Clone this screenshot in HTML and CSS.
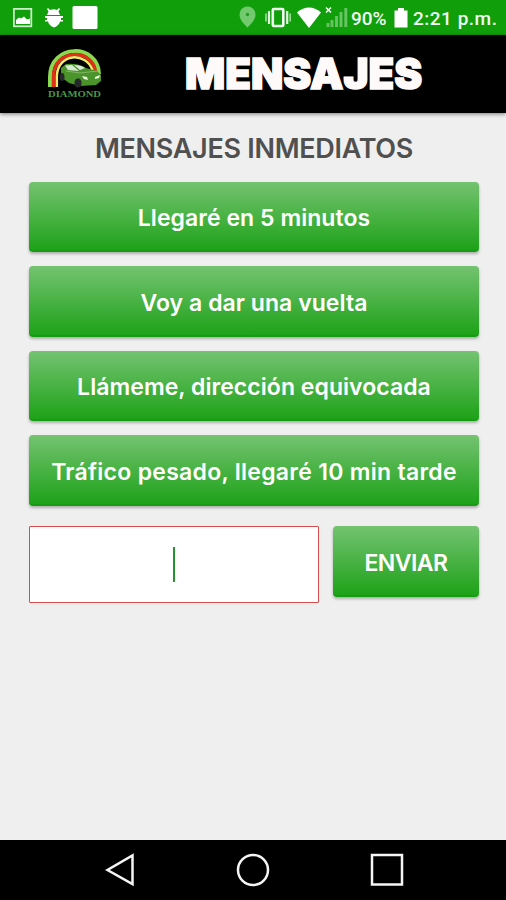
FILE: index.html
```html
<!DOCTYPE html>
<html lang="es">
<head>
  <meta charset="UTF-8" />
  <meta name="viewport" content="width=device-width, initial-scale=1.0"/>
  <title>Mensajes</title>
  <link rel="stylesheet" href="styles.css">
</head>
<body>

  <div class="status-bar">
    <svg class="status-left" width="100" height="35" viewBox="0 0 100 35">
      <rect x="13.900" y="8.900" width="17.400" height="17.400" fill="none" stroke="#c9efc6" stroke-width="1.800"/>
      <path d="M16 24v-4l3-2.500 2 1 3-2 3 3 3-1v5.500z" fill="#fff"/>
      <path d="M48 8l2 2q4-1.500 7 0l2-2 1 1-1.500 2.500 1.500 3.500H47l1.500-3.500L47 9z" fill="#fff"/>
      <path d="M45 16h18v2h-2v2h2v1.500h-3q-1 4-6 6-5-2-6-6h-3V20h2v-2h-2z" fill="#fff"/>
      <rect x="72.500" y="6" width="25" height="23" rx="1.500" fill="#fff"/>
    </svg>
    <div class="status-right">
      <svg width="112" height="35" viewBox="0 0 112 35">
        <path d="M9.500 6.500a8 8 0 0 1 8 8c0 5-4 9-8 13-4-4-8-8-8-13a8 8 0 0 1 8-8z" fill="#72c96e"/>
        <circle cx="9.500" cy="14.500" r="1.700" fill="#249b20"/>
        <rect x="34.800" y="9" width="10.500" height="17" rx="1" fill="none" stroke="#f0fbef" stroke-width="2.600"/>
        <path d="M31 11v13M49.200 11v13" stroke="#dff5dd" stroke-width="2.200"/>
        <path d="M28 13.500v8M52.200 13.500v8" stroke="#9cdc99" stroke-width="1.600"/>
        <path d="M59 12.500q12-10 24 0L71 28z" fill="#fff"/>
        <path d="M88 7.500l5 5m0-5l-5 5" stroke="#fff" stroke-width="1.500"/>
        <path d="M90 23v4M94 20v7M98.500 16v11M103 12v15M107.800 8v19" stroke="#68c464" stroke-width="2.900"/>
      </svg>
      <span class="percent">90%</span>
      <svg class="battery" width="14" height="35" viewBox="0 0 14 35">
        <path d="M4 8h6v2.500h3.500v17H.5v-17H4z" fill="#fff"/>
      </svg>
      <span class="clock">2:21 p.m.</span>
    </div>
  </div>

  <header>
    <svg class="logo" width="54" height="50" viewBox="0 0 54 50">
      <path d="M2 38V28C2-6 50-6 51 25" fill="none" stroke="#8bd94f" stroke-width="4"/>
      <path d="M5.500 38V28C5.500-1 45-1 47.500 23" fill="none" stroke="#df3018" stroke-width="3.500"/>
      <path d="M8.800 38V27C10 3.500 38 3 44.500 21" fill="none" stroke="#f5e96b" stroke-width="2.500"/>
      <path d="M13 19l5-4q12-1 20 4l11 3 4 4v6l-5 4-16 1-11-3-8-6z" fill="#4b942c"/>
      <path d="M17 16.500l7-.5 7 6-11-1zM26 16q7 0 11 3l-5 2z" fill="#d9e8d5"/>
      <path d="M18 22l14 2 18-2" fill="none" stroke="#82b866" stroke-width="1"/>
      <ellipse cx="30" cy="34" rx="3.500" ry="4.500" fill="#25292a"/>
      <ellipse cx="14" cy="28" rx="2.500" ry="4" fill="#25292a"/>
      <path d="M34 27l5 1 1 3-4-1zM47 28l5-2-1 3-4 1z" fill="#edf6df"/>
      <text class="logo-name" x="0" y="48" textLength="53" lengthAdjust="spacingAndGlyphs">DIAMOND</text>
    </svg>
    <h1>MENSAJES</h1>
  </header>

  <main>
    <h2>MENSAJES INMEDIATOS</h2>
    <div class="messages">
      <button type="button">Llegaré en 5 minutos</button>
      <button type="button">Voy a dar una vuelta</button>
      <button type="button">Llámeme, dirección equivocada</button>
      <button type="button" class="long">Tráfico pesado, llegaré 10 min tarde</button>
    </div>
    <form class="send-row" onsubmit="return false">
      <div class="message-input" contenteditable="true"><span class="caret"></span></div>
      <button type="submit" class="send">ENVIAR</button>
    </form>
  </main>

  <nav>
    <svg width="32" height="36" viewBox="0 0 32 36"><path d="M28.500 3.500v28.500L3.500 18z"/></svg>
    <svg width="36" height="36" viewBox="0 0 36 36"><circle cx="18" cy="18" r="15"/></svg>
    <svg width="36" height="36" viewBox="0 0 36 36"><rect x="3" y="3" width="30" height="29.500"/></svg>
  </nav>

</body>
</html>
```
FILE: styles.css
```css
* { margin: 0; padding: 0; box-sizing: border-box; }

body {
  height: 900px;
  display: flex;
  flex-direction: column;
  overflow: hidden;
  font-family: Inter, sans-serif;
  background: #efefef;
}

svg {
  display: block;
  flex: none;
}

.status-bar {
  height: 35px;
  flex: none;
  display: flex;
  justify-content: space-between;
  background: #109f0b;
  color: #f2fcf1;
}

.status-right {
  display: flex;
  width: 268px;
  white-space: nowrap;
  font-family: Roboto, sans-serif;
  font-size: 19px;
  font-weight: 500;
  line-height: 37px;
}

.percent {
  width: 44px;
  padding-left: 1px;
}

.clock {
  padding-left: 5px;
  letter-spacing: 0.5px;
}

header {
  height: 78px;
  flex: none;
  display: flex;
  align-items: center;
  padding-left: 48px;
  background: #000;
  box-shadow: 0 1px 4px rgba(0, 0, 0, 0.5);
}

.logo-name {
  font-family: "Liberation Serif", serif;
  font-size: 8px;
  font-weight: bold;
  fill: #4e9745;
}

h1 {
  margin-left: 83px;
  font-size: 42px;
  font-weight: 900;
  line-height: 78px;
  color: #fffafa;
  -webkit-text-stroke: 1.5px #fffafa;
  stroke-linejoin: round;
}

main {
  flex: 1;
  padding: 18px 27px 0 29px;
}

h2 {
  height: 50.5px;
  line-height: 35px;
  text-align: center;
  font-size: 27px;
  font-weight: 600;
  letter-spacing: -0.3px;
  color: #505050;
}

.messages {
  display: flex;
  flex-direction: column;
  gap: 14px;
}

button {
  width: 100%;
  height: 70.5px;
  border: none;
  border-bottom: 2px solid #169c12;
  border-radius: 4px;
  background: linear-gradient(#74c370, #1ea219);
  box-shadow: 0 2px 3px rgba(0, 0, 0, 0.28);
  color: #fff;
  font-family: inherit;
  font-size: 23px;
  font-weight: 600;
  letter-spacing: 0.05px;
  white-space: nowrap;
  padding-top: 5px;
}

.messages .long {
  letter-spacing: 0.28px;
}

.send-row {
  display: flex;
  gap: 14px;
  margin-top: 20.5px;
}

.message-input {
  width: 290px;
  height: 77px;
  display: flex;
  justify-content: center;
  align-items: center;
  background: #fff;
  border: 1px solid #da4d4d;
  border-radius: 1px;
}

.caret {
  width: 2.5px;
  height: 35px;
  background: #25942a;
}

.send-row .send {
  width: 146px;
  letter-spacing: -0.5px;
}

nav {
  height: 60px;
  flex: none;
  display: flex;
  justify-content: space-between;
  align-items: center;
  padding: 0 101px 0 104px;
  background: #000;
}

nav svg {
  fill: none;
  stroke: #f5f5f5;
  stroke-width: 2.5;
}
```
